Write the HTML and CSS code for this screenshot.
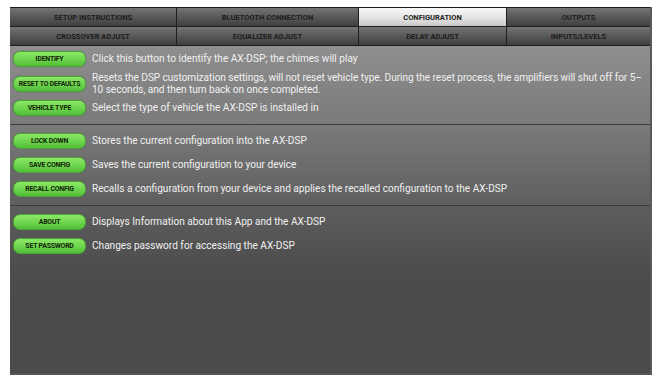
FILE: index.html
```html
<!DOCTYPE html>
<html>
<head>
<meta charset="utf-8">
<link rel="stylesheet" href="styles.css">
</head>
<body>
<div class="app">
  <nav class="tabs">
    <div class="tab">SETUP INSTRUCTIONS</div>
    <div class="tab">BLUETOOTH CONNECTION</div>
    <div class="tab active">CONFIGURATION</div>
    <div class="tab">OUTPUTS</div>
    <div class="tab">CROSSOVER ADJUST</div>
    <div class="tab">EQUALIZER ADJUST</div>
    <div class="tab">DELAY ADJUST</div>
    <div class="tab">INPUTS/LEVELS</div>
  </nav>
  <main class="content">
    <section class="group first">
      <div class="row"><button class="btn">IDENTIFY</button><p class="desc">Click this button to identify the AX-DSP; the chimes will play</p></div>
      <div class="row"><button class="btn">RESET TO DEFAULTS</button><p class="desc tight">Resets the DSP customization settings, will not reset vehicle type. During the reset process, the amplifiers will shut off for 5–10 seconds, and then turn back on once completed.</p></div>
      <div class="row"><button class="btn">VEHICLE TYPE</button><p class="desc">Select the type of vehicle the AX-DSP is installed in</p></div>
    </section>
    <section class="group">
      <div class="row"><button class="btn">LOCK DOWN</button><p class="desc">Stores the current configuration into the AX-DSP</p></div>
      <div class="row"><button class="btn">SAVE CONFIG</button><p class="desc">Saves the current configuration to your device</p></div>
      <div class="row"><button class="btn">RECALL CONFIG</button><p class="desc">Recalls a configuration from your device and applies the recalled configuration to the AX-DSP</p></div>
    </section>
    <section class="group last">
      <div class="row"><button class="btn">ABOUT</button><p class="desc">Displays Information about this App and the AX-DSP</p></div>
      <div class="row"><button class="btn">SET PASSWORD</button><p class="desc">Changes password for accessing the AX-DSP</p></div>
    </section>
  </main>
</div>
</body>
</html>
```

FILE: styles.css
```css
* { box-sizing: border-box; }
html, body {
  margin: 0;
  padding: 0;
  background: #ffffff;
  width: 657px;
  height: 384px;
  overflow: hidden;
}
body {
  padding: 7px 0 0 10px;
  font-family: Roboto, "Liberation Sans", sans-serif;
}
.app {
  width: 642px;
  height: 368px;
  display: flex;
  flex-direction: column;
  background: #4b4b4b;
  border-right: 2px solid #5a5a5a;
  border-bottom: 2px solid #555555;
}
.tabs {
  display: grid;
  grid-template-columns: 166px 181px 147px 1fr;
  grid-template-rows: 18px 18px;
  background: #1e1e1e;
  border-top: 1px solid #1a1a1a;
  gap: 1px;
  padding-bottom: 1px;
}
.tab {
  display: flex;
  align-items: center;
  justify-content: center;
  font-size: 7.5px;
  font-weight: 700;
  color: #1c1c1c;
  background: linear-gradient(#747474, #595959 50%, #3f3f3f);
  letter-spacing: 0;
}
.tab.active {
  background: linear-gradient(#f7f7f7, #e6e6e6 50%, #c9c9c9);
  color: #222222;
}
.content {
  flex: 1;
  background: linear-gradient(#8e8e8e 0px, #7a7a7a 80px, #5e5e5e 160px, #4c4c4c 225px, #4b4b4b);
}
.group {
  display: flex;
  flex-direction: column;
  gap: 8px;
  padding: 8px 0 8px 3px;
  border-bottom: 1px solid #3b3b3b;
}
.group.first {
  gap: 5px;
  padding-top: 5px;
}
.group.last {
  border-bottom: none;
}
.row {
  display: flex;
  align-items: center;
  gap: 6px;
  min-height: 16px;
}
.btn {
  flex: none;
  width: 73px;
  height: 16px;
  margin: 0;
  padding: 0;
  border: 1px solid #4aa534;
  border-radius: 7px;
  background: linear-gradient(#8ce865, #6fd64e 50%, #52bd3a);
  font-family: Roboto, "Liberation Sans", sans-serif;
  font-size: 6.9px;
  font-weight: 700;
  color: #13240b;
  letter-spacing: -0.2px;
  white-space: nowrap;
  box-shadow: 0 0 1px rgba(40, 90, 30, 0.6);
}
.desc {
  margin: 0;
  font-size: 10.1px;
  line-height: 11.5px;
  color: #f0f0f0;
  padding-right: 3px;
}
.desc.tight {
  padding-right: 0;
  letter-spacing: -0.05px;
}
```
